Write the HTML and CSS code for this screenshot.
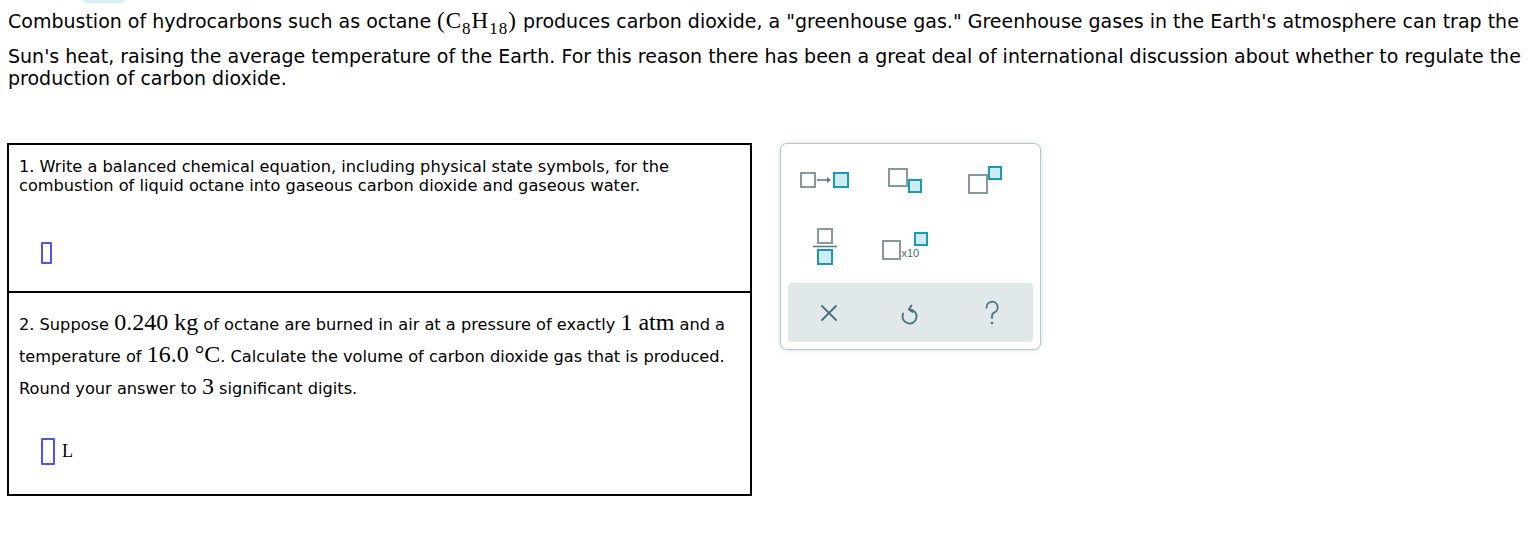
FILE: index.html
```html
<!DOCTYPE html>
<html>
<head>
<meta charset="utf-8">
<link rel="stylesheet" href="styles.css">
</head>
<body>
<div class="tab-stub"></div>
<p class="intro">Combustion of hydrocarbons such as octane <span class="math">(C<sub>8</sub>H<sub>18</sub>)</span> produces carbon dioxide, a "greenhouse gas." Greenhouse gases in the Earth's atmosphere can trap the Sun's heat, raising the average temperature of the Earth. For this reason there has been a great deal of international discussion about whether to regulate the production of carbon dioxide.</p>

<div class="workspace">
  <div class="questions">
    <div class="q q1">
      <div class="q-text">1. Write a balanced chemical equation, including physical state symbols, for the combustion of liquid octane into gaseous carbon dioxide and gaseous water.</div>
      <div class="answer"><span class="slot slot1"></span></div>
    </div>
    <div class="q q2">
      <div class="q-text">2. Suppose <span class="m">0.240 kg</span> of octane are burned in air at a pressure of exactly <span class="m">1 atm</span> and a temperature of <span class="m">16.0 °C</span>. Calculate the volume of carbon dioxide gas that is produced. Round your answer to <span class="m">3</span> significant digits.</div>
      <div class="answer"><span class="slot slot2"></span><span class="unit">L</span></div>
    </div>
  </div>

  <div class="palette">
    <div class="tools">
      <div class="tool">
        <svg width="50" height="16" viewBox="0 0 50 16">
          <rect class="g" x="1" y="1" width="14" height="14"/>
          <line x1="17" y1="8" x2="30" y2="8" stroke="#5f7b86" stroke-width="1.6"/>
          <path d="M27 5 L31 8 L27 11 Z" fill="#5f7b86"/>
          <rect class="t" x="34" y="1" width="14" height="14"/>
        </svg>
      </div>
      <div class="tool">
        <svg width="34" height="25" viewBox="0 0 34 25">
          <rect class="g" x="1" y="1" width="18" height="17"/>
          <rect class="t" x="21" y="12" width="12" height="12"/>
        </svg>
      </div>
      <div class="tool">
        <svg width="35" height="28" viewBox="0 0 35 28">
          <rect class="g" x="1" y="9" width="18" height="18"/>
          <rect class="t" x="21" y="1" width="12" height="12"/>
        </svg>
      </div>
      <div class="tool">
        <svg width="24" height="37" viewBox="0 0 24 37">
          <rect class="g" x="5" y="1" width="14" height="14"/>
          <line x1="0" y1="18.5" x2="24" y2="18.5" stroke="#5f7b86" stroke-width="1.6"/>
          <rect class="t" x="5" y="22" width="14" height="14"/>
        </svg>
      </div>
      <div class="tool">
        <svg width="46" height="28" viewBox="0 0 46 28">
          <rect class="g" x="1" y="9" width="17" height="18"/>
          <text x="19.5" y="25" class="x10">x10</text>
          <rect class="t" x="33" y="1" width="12" height="12"/>
        </svg>
      </div>
      <div class="tool"></div>
    </div>
    <div class="actions">
      <div class="action">
        <svg width="18" height="18" viewBox="0 0 18 18">
          <path d="M2 2 L16 16 M16 2 L2 16" stroke="#4b6f7c" stroke-width="1.8" fill="none" stroke-linecap="round"/>
        </svg>
      </div>
      <div class="action">
        <svg width="20" height="24" viewBox="0 0 20 24">
          <path d="M9.5 8.5 A7 7 0 1 1 3.2 12.5" stroke="#4b6f7c" stroke-width="1.8" fill="none" stroke-linecap="round"/>
          <path d="M11.5 4.5 L8.8 8.6 L12.6 11" stroke="#4b6f7c" stroke-width="1.8" fill="none" stroke-linecap="round" stroke-linejoin="round"/>
        </svg>
      </div>
      <div class="action">
        <svg width="18" height="26" viewBox="0 0 18 26">
          <path d="M3.5 7.5 A5.6 5.6 0 1 1 11 12.6 C9.4 13.4 9 14.4 9 16 L9 18" stroke="#4b6f7c" stroke-width="1.8" fill="none" stroke-linecap="round"/>
          <circle cx="9" cy="23" r="1.3" fill="#4b6f7c"/>
        </svg>
      </div>
    </div>
  </div>
</div>
</body>
</html>
```

FILE: styles.css
```css
html, body {
  margin: 0;
  padding: 0;
  background: #ffffff;
}

body {
  padding: 0 8px;
  position: relative;
  font-family: "DejaVu Sans", Verdana, sans-serif;
  color: #000;
}

.tab-stub {
  position: absolute;
  left: 80px;
  top: -13px;
  width: 48px;
  height: 16px;
  border-radius: 8px;
  background: #d4f1f7;
}

.intro {
  margin: 0;
  padding-top: 10px;
  font-size: 19px;
  line-height: 22px;
}

.math {
  display: inline-block;
  font-family: "Liberation Serif", "Times New Roman", serif;
  font-size: 23px;
  line-height: 22px;
  letter-spacing: 1px;
  padding-bottom: 13px;
}

.math sub {
  font-size: 17px;
  vertical-align: -6px;
  line-height: 0;
}

.workspace {
  display: flex;
  align-items: flex-start;
  margin-top: 54px;
}

.questions {
  width: 741px;
  margin-left: -1px;
  border: 2px solid #000;
}

.q {
  padding-left: 10px;
  padding-right: 10px;
}

.q1 {
  padding-top: 12px;
  height: 134px;
  border-bottom: 2px solid #000;
}

.q1 .q-text {
  font-size: 16.2px;
  line-height: 19px;
}

.q1 .answer {
  margin-top: 47px;
  padding-left: 22px;
  height: 22px;
}

.slot {
  display: inline-block;
  box-sizing: border-box;
  border: 2px solid #5050ff;
  border-radius: 1px;
  vertical-align: top;
}

.slot1 {
  width: 11px;
  height: 22px;
}

.q2 {
  padding-top: 16px;
  height: 185px;
}

.q2 .q-text {
  font-size: 16.2px;
  line-height: 32px;
}

.m {
  font-family: "Liberation Serif", "Times New Roman", serif;
  font-size: 24px;
  line-height: 20px;
}

.q2 .answer {
  margin-top: 33px;
  padding-left: 22px;
  display: flex;
  align-items: center;
  height: 27px;
}

.slot2 {
  width: 14px;
  height: 27px;
}

.unit {
  font-family: "Liberation Serif", "Times New Roman", serif;
  font-size: 18px;
  margin-left: 7px;
}

.palette {
  margin-left: 28px;
  width: 245px;
  border: 1px solid #b9c5ca;
  border-radius: 7px;
  box-shadow: 0 0 5px rgba(90, 110, 120, 0.25);
  padding: 3px 7px 7px;
  background: #fff;
}

.tools {
  display: grid;
  grid-template-columns: 80px 80px 80px;
  grid-template-rows: 66px 66px;
  margin-left: -3px;
}

.tool {
  display: flex;
  align-items: center;
  justify-content: center;
}

.tool svg {
  display: block;
}

.g {
  fill: #fff;
  stroke: #87999f;
  stroke-width: 2;
}

.t {
  fill: #cdebf1;
  stroke: #1a9bb5;
  stroke-width: 2;
}

.x10 {
  font-family: "Liberation Sans", Arial, sans-serif;
  font-size: 11px;
  fill: #4f6b76;
}

.actions {
  margin-top: 4px;
  height: 59px;
  background: #e1e8ea;
  border-radius: 4px;
  display: grid;
  grid-template-columns: 1fr 1fr 1fr;
}

.action {
  display: flex;
  align-items: center;
  justify-content: center;
}

.action svg {
  display: block;
}
```
